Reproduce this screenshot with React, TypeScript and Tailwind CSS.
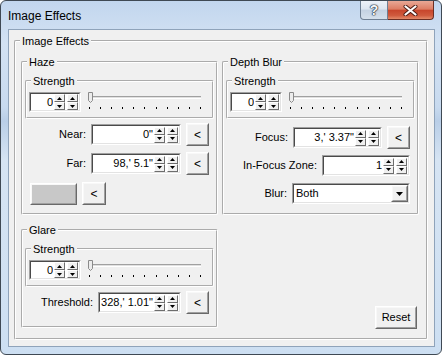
import React from "react";

function SpinBtn({ up }: { up?: boolean }) {
  return (
    <div className="w-[11px] h-[8px] bg-[#f0f0f0] border border-t-white border-l-white border-b-[#6d6d6d] border-r-[#6d6d6d] flex items-center justify-center">
      <svg width="5" height="3" viewBox="0 0 5 3">
        <polygon points={up ? "0,3 5,3 2.5,0" : "0,0 5,0 2.5,3"} fill="#000" />
      </svg>
    </div>
  );
}

function SpinCol() {
  return (
    <div className="flex flex-col">
      <SpinBtn up />
      <SpinBtn />
    </div>
  );
}

function Field({ className, children }: { className: string; children: React.ReactNode }) {
  return (
    <div className={`border border-t-[#a0a0a0] border-l-[#a0a0a0] border-b-white border-r-white ${className}`}>
      <div className="h-full w-full border border-t-[#4a4a4a] border-l-[#4a4a4a] border-b-[#e3e3e3] border-r-[#e3e3e3] bg-white flex items-center">
        {children}
      </div>
    </div>
  );
}

function SpinField({ value, className }: { value: string; className: string }) {
  return (
    <Field className={className}>
      <span className="flex-1 text-right whitespace-nowrap overflow-hidden leading-[13px]">{value}</span>
      <div className="flex gap-[2px] ml-[1px] mr-[1px]">
        <SpinCol />
        <SpinCol />
      </div>
    </Field>
  );
}

function Btn({ className, inner, children }: { className: string; inner?: string; children?: React.ReactNode }) {
  return (
    <div className={`border border-t-white border-l-white border-b-[#696969] border-r-[#696969] bg-[#f0f0f0] ${className}`}>
      <div className={`h-full w-full border border-t-[#f8f8f8] border-l-[#f8f8f8] border-b-[#a0a0a0] border-r-[#a0a0a0] flex items-center justify-center ${inner ?? ""}`}>
        {children}
      </div>
    </div>
  );
}

function Slider() {
  const ticks = Array.from({ length: 11 });
  return (
    <div className="relative flex-1 ml-[7px] mr-[11px] h-[20px] flex flex-col">
      <div className="mt-[4px] h-[3px] border-t border-b border-t-[#a0a0a0] border-b-white bg-[#e0e0e0]" />
      <div className="mt-[8px] flex justify-between pl-[1px]">
        {ticks.map((_, i) => (
          <div key={i} className="w-[1px] h-[2px] bg-black" />
        ))}
      </div>
      <svg className="absolute left-0 top-0" width="6" height="12" viewBox="0 0 6 12">
        <polygon points="0.5,0.5 4.5,0.5 4.5,8.5 2.5,10.5 0.5,8.5" fill="#ececec" stroke="#8a8a8a" />
      </svg>
    </div>
  );
}

function Legend({ children }: { children: React.ReactNode }) {
  return <legend className="ml-[4px] px-[2px] leading-[12px]">{children}</legend>;
}

const groove = "border-2 [border-style:groove] border-white rounded-[2px]";

function Strength() {
  return (
    <fieldset className={`${groove} mx-[2px] mt-[7px]`}>
      <Legend>Strength</Legend>
      <div className="flex mt-[5px] mb-[5px] pl-[2px]">
        <SpinField value="0" className="w-[52px] h-[20px]" />
        <Slider />
      </div>
    </fieldset>
  );
}

function Arrow() {
  return <span className="leading-[12px] text-[12px]">&lt;</span>;
}

export default function App() {
  return (
    <div className="w-[442px] h-[355px] font-['Liberation_Sans',Arial,sans-serif] text-[11px] text-black">
      <div className="w-full h-full rounded-[6px] border border-[#3f4954] bg-[linear-gradient(180deg,#c2d6ee_0%,#d3e2f3_12%,#c8daef_30%,#b9cee7_34%,#d6e4f3_45%,#cddff2_100%)] flex flex-col">
        <div className="h-[28px] flex items-start justify-between">
          <div className="pl-[7px] h-full flex items-center text-[12px] pt-[1px]">Image Effects</div>
          <div className="flex mr-[7px]">
            <div className="w-[28px] h-[19px] rounded-bl-[4px] border border-t-0 border-[#6e7f93] bg-[linear-gradient(180deg,#edf2f8_0%,#dde6f0_45%,#c4d2e2_50%,#d5e0ec_100%)] flex items-center justify-center">
              <span className="text-[14px] font-bold leading-none text-[#f4f6f9] [text-shadow:0_0_1px_#202a36,0_0_1px_#202a36,0_0_1px_#202a36,0_0_2px_#46566a]">?</span>
            </div>
            <div className="w-[46px] h-[19px] rounded-br-[4px] border border-t-0 border-l-0 border-[#6b2e23] bg-[linear-gradient(180deg,#e9a896_0%,#dd7d64_45%,#c8462c_52%,#d05a3d_80%,#e38a6a_100%)] flex items-center justify-center">
              <svg width="15" height="11" viewBox="0 0 15 11">
                <path d="M2.5 1.5 L12.5 9.5 M12.5 1.5 L2.5 9.5" stroke="#4a1a12" strokeWidth="4" strokeLinecap="round" />
                <path d="M2.5 1.5 L12.5 9.5 M12.5 1.5 L2.5 9.5" stroke="#ffffff" strokeWidth="2.2" strokeLinecap="round" />
              </svg>
            </div>
          </div>
        </div>
        <div className="ml-[7px] w-[427px] h-[318px] border border-[#8fa3ba] bg-[#f0f0f0] pt-[5px] pl-[5px] pr-[6px] pb-[6px] flex">
          <fieldset className={`${groove} flex-1 flex flex-col`}>
            <Legend>Image Effects</Legend>
            <div className="flex-1 flex pl-[5px] gap-[4px]">
              <div className="flex flex-col w-[197px]">
                <fieldset className={`${groove} mt-[9px] flex flex-col`}>
                  <Legend>Haze</Legend>
                  <Strength />
                  <div className="flex flex-col pr-[7px] pb-[8px]">
                    <div className="mt-[4px] h-[23px] flex items-center justify-end">
                      <span>Near:</span>
                      <SpinField value={'0"'} className="ml-[5px] w-[90px] h-[21px]" />
                      <Btn className="ml-[5px] w-[23px] h-[23px]"><Arrow /></Btn>
                    </div>
                    <div className="mt-[6px] h-[23px] flex items-center justify-end">
                      <span>Far:</span>
                      <SpinField value={"98,' 5.1\""} className="ml-[5px] w-[90px] h-[21px]" />
                      <Btn className="ml-[5px] w-[23px] h-[23px]"><Arrow /></Btn>
                    </div>
                    <div className="mt-[7px] h-[23px] flex items-center pl-[7px]">
                      <Btn className="w-[47px] h-[22px]" inner="bg-[#c8c8c8]" />
                      <Btn className="ml-[5px] w-[24px] h-[23px]"><Arrow /></Btn>
                    </div>
                  </div>
                </fieldset>
                <fieldset className={`${groove} mt-[9px] flex flex-col`}>
                  <Legend>Glare</Legend>
                  <Strength />
                  <div className="flex flex-col pr-[7px] pb-[12px]">
                    <div className="mt-[4px] h-[23px] flex items-center justify-end">
                      <span>Threshold:</span>
                      <SpinField value={"328,' 1.01\""} className="ml-[5px] w-[83px] h-[21px]" />
                      <Btn className="ml-[5px] w-[23px] h-[23px]"><Arrow /></Btn>
                    </div>
                  </div>
                </fieldset>
              </div>
              <div className="flex-1 flex flex-col">
                <fieldset className={`${groove} mt-[9px] w-[197px] flex flex-col`}>
                  <Legend>Depth Blur</Legend>
                  <Strength />
                  <div className="flex flex-col pr-[7px] pb-[8px]">
                    <div className="mt-[7px] h-[23px] flex items-center justify-end">
                      <span>Focus:</span>
                      <SpinField value={"3,' 3.37\""} className="ml-[5px] w-[89px] h-[21px]" />
                      <Btn className="ml-[5px] w-[23px] h-[23px]"><Arrow /></Btn>
                    </div>
                    <div className="mt-[5px] h-[23px] flex items-center justify-end">
                      <span>In-Focus Zone:</span>
                      <SpinField value="1" className="ml-[5px] w-[88px] h-[21px]" />
                    </div>
                    <div className="mt-[5px] h-[23px] flex items-center justify-end">
                      <span>Blur:</span>
                      <Field className="ml-[5px] w-[118px] h-[21px]">
                        <span className="flex-1 pl-[2px] leading-[13px]">Both</span>
                        <Btn className="w-[17px] h-[17px]">
                          <svg width="7" height="4" viewBox="0 0 7 4">
                            <polygon points="0,0 7,0 3.5,4" fill="#000" />
                          </svg>
                        </Btn>
                      </Field>
                    </div>
                  </div>
                </fieldset>
                <div className="mt-auto self-end mr-[9px] mb-[9px]">
                  <Btn className="w-[42px] h-[23px]"><span className="leading-[13px]">Reset</span></Btn>
                </div>
              </div>
            </div>
          </fieldset>
        </div>
      </div>
    </div>
  );
}
